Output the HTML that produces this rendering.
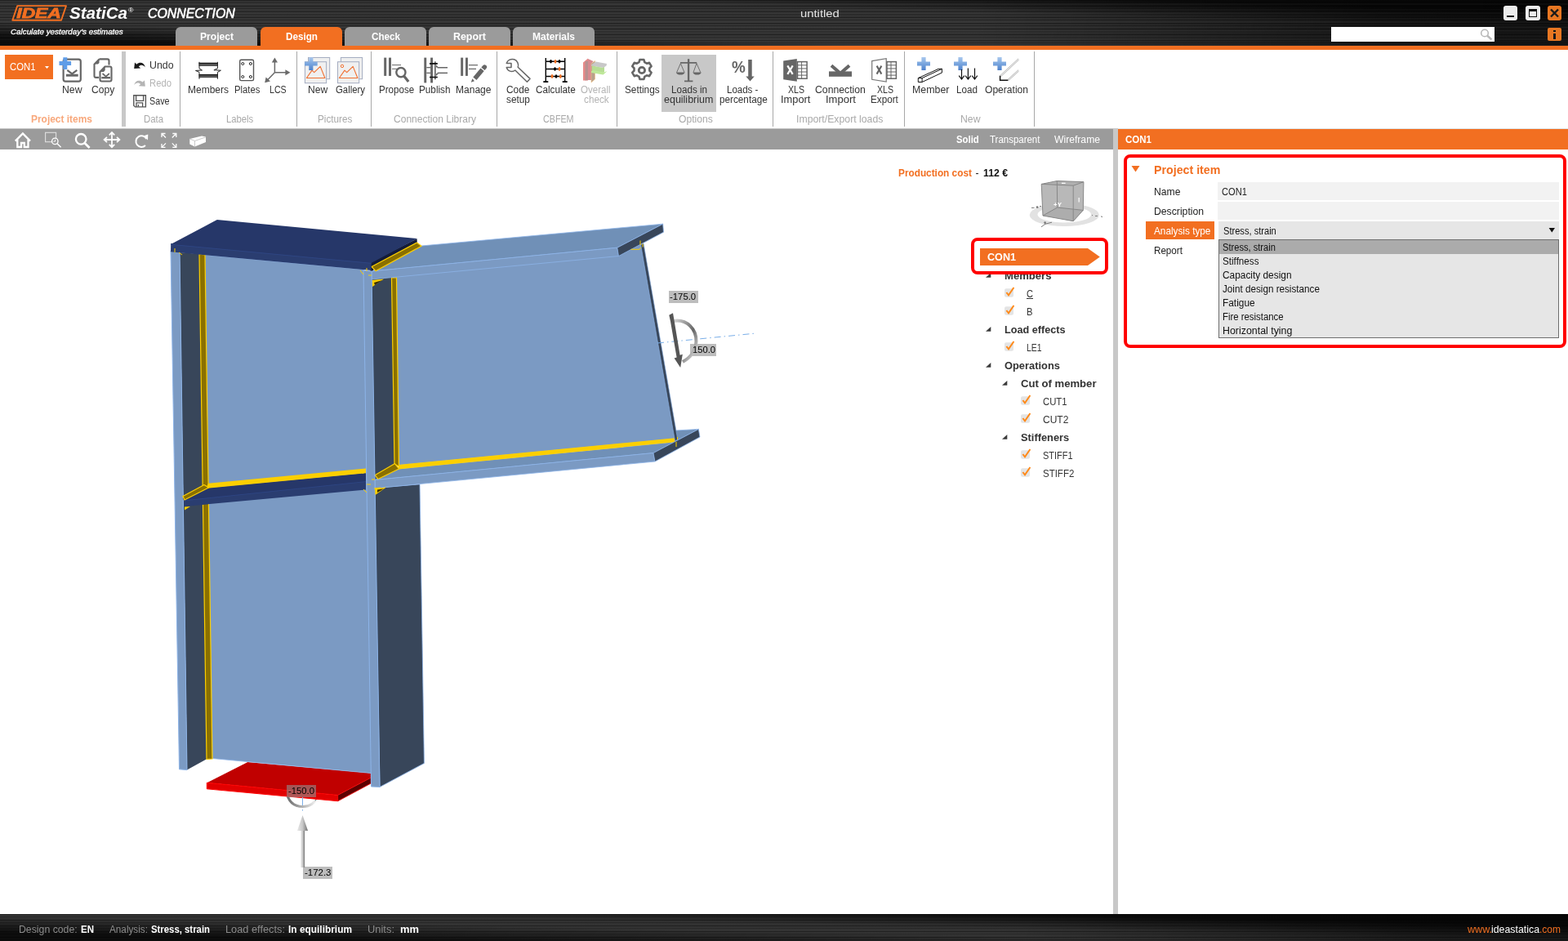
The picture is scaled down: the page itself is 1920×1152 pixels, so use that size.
<!DOCTYPE html>
<html lang="en"><head><meta charset="utf-8"><title>IDEA StatiCa Connection - untitled</title>
<style>
*{margin:0;padding:0;box-sizing:border-box}
html,body{width:1920px;height:1152px;overflow:hidden;background:#fff;font-family:"Liberation Sans",sans-serif;}
#app{position:absolute;left:0;top:0;width:1920px;height:1152px;overflow:hidden;background:#fff}
.abs{position:absolute}
.t{position:absolute;white-space:nowrap;line-height:1;transform-origin:0 0;display:block}
.hdr{left:0;top:0;width:1920px;height:57px;background:#0b0b0b;overflow:hidden}
.brush{position:absolute;left:0;top:0;width:100%;height:100%;
 background:
  repeating-linear-gradient(180deg,rgba(0,0,0,.38) 0px,rgba(0,0,0,.38) 1px,rgba(0,0,0,0) 1.5px,rgba(0,0,0,0) 3px,rgba(0,0,0,.22) 3.5px,rgba(0,0,0,0) 4.5px,rgba(0,0,0,0) 7px),
  repeating-linear-gradient(180deg,rgba(255,255,255,.05) 0px,rgba(255,255,255,0) 1px,rgba(255,255,255,0) 4px,rgba(255,255,255,.06) 5px,rgba(255,255,255,0) 6px,rgba(255,255,255,0) 11px),
  linear-gradient(90deg,rgba(0,0,0,0) 0%,rgba(0,0,0,0) 62%,rgba(0,0,0,.55) 88%,rgba(0,0,0,.6) 100%),
  linear-gradient(181.53deg,rgba(255,255,255,0) 14px,rgba(255,255,255,.15) 34px,rgba(255,255,255,.16) 78px,rgba(255,255,255,0) 97px),
  #0d0d0d}
.brush.sb{background:
  repeating-linear-gradient(180deg,rgba(0,0,0,.38) 0px,rgba(0,0,0,.38) 1px,rgba(0,0,0,0) 1.5px,rgba(0,0,0,0) 3px,rgba(0,0,0,.22) 3.5px,rgba(0,0,0,0) 4.5px,rgba(0,0,0,0) 7px),
  linear-gradient(90deg,rgba(0,0,0,0) 0%,rgba(0,0,0,0) 65%,rgba(0,0,0,.45) 90%,rgba(0,0,0,.5) 100%),
  linear-gradient(181.1deg,rgba(255,255,255,0) 14px,rgba(255,255,255,.15) 30px,rgba(255,255,255,.16) 40px,rgba(255,255,255,0) 60px),
  #0d0d0d}
.oline{left:0;top:56px;width:1920px;height:5px;background:#f26f21}
.tab{position:absolute;top:33px;height:24px;border-radius:6px 6px 0 0;background:#9b9b9b}
.tab.on{background:#f26f21}
.rsep{position:absolute;top:63px;height:92px;width:1px;background:#a8a8a8}
.tbar{left:0;top:157px;width:1363px;height:26px;background:#9b9b9b;border-top:1px solid #c4c4c4}
.split{left:1363px;top:157px;width:6px;height:963px;background:#c8c8c8}
.phead{left:1369px;top:157px;width:551px;height:26px;background:#f26f21;border-top:1px solid #dfe3e6}
.sbar{left:0;top:1119px;width:1920px;height:33px;background:#0b0b0b;overflow:hidden}
.lbl{position:absolute;background:#bdbdbd;height:15px}
.fld{position:absolute;background:#f2f2f2}
.redbox{position:absolute;border:4px solid #ff0000;border-radius:8px}
.cb{position:absolute;width:12px;height:12px;background:#e6e6e6;border-radius:2px}
</style></head><body><div id="app">
<div class="abs hdr"><div class="brush"></div></div>
<div class="tab" style="left:215px;width:100px"></div>
<div class="tab on" style="left:319px;width:100px"></div>
<div class="tab" style="left:422px;width:99.5px"></div>
<div class="tab" style="left:525px;width:100px"></div>
<div class="tab" style="left:628.3px;width:100px"></div>
<div class="abs oline"></div>
<!-- window buttons -->
<div class="abs" style="left:1841px;top:7px;width:17px;height:18px;background:#ececec;border-radius:3px"><div class="abs" style="left:4px;top:11.5px;width:9px;height:2.5px;background:#111"></div></div>
<div class="abs" style="left:1868px;top:7px;width:17.5px;height:18px;background:#ececec;border-radius:3px"><div class="abs" style="left:3.8px;top:4px;width:10px;height:10px;border:1.6px solid #111;border-top-width:3px"></div></div>
<div class="abs" style="left:1895px;top:7px;width:17px;height:18px;background:#e87722;border-radius:3px"><svg class="abs" style="left:0;top:0" width="17" height="18"><path d="M4,4.5l9,9M13,4.5l-9,9" stroke="#1a1a1a" stroke-width="2.4"/></svg></div>
<div class="abs" style="left:1630px;top:33px;width:200px;height:18px;background:#fff"></div>
<svg class="abs" style="left:1810px;top:33px" width="20" height="18"><circle cx="8" cy="7.5" r="4.3" fill="none" stroke="#b9b9b9" stroke-width="1.6"/><path d="M11,10.5l5.5,5" stroke="#b9b9b9" stroke-width="2.4"/></svg>
<div class="abs" style="left:1895px;top:33.5px;width:17px;height:16.5px;background:#e87722;border-radius:2px"><div class="abs" style="left:7.3px;top:3px;width:2.6px;height:2.6px;background:#1a1a1a"></div><div class="abs" style="left:7.3px;top:7px;width:2.6px;height:7px;background:#1a1a1a"></div></div>
<!-- ribbon -->
<div class="abs" style="left:6px;top:67px;width:59px;height:30px;background:#f26f21"></div>
<svg class="abs" style="left:54px;top:80px" width="8" height="5"><polygon points="1,1 6,1 3.5,4" fill="#fff"/></svg>
<div class="abs" style="left:149px;top:63px;width:5px;height:92px;background:#c8c8c8"></div>
<div class="rsep" style="left:220px"></div><div class="rsep" style="left:363px"></div><div class="rsep" style="left:454px"></div><div class="rsep" style="left:608px"></div><div class="rsep" style="left:755px"></div><div class="rsep" style="left:946px"></div><div class="rsep" style="left:1107px"></div><div class="rsep" style="left:1266px"></div>
<div class="abs" style="left:810px;top:67px;width:67px;height:70px;background:#c8c8c8"></div>
<!-- toolbar / splitter / panel -->
<div class="abs tbar"></div>
<div class="abs split"></div>
<div class="abs phead"></div>
<!-- status bar -->
<div class="abs sbar"><div class="brush sb"></div></div>
<!-- property fields -->
<div class="fld" style="left:1491px;top:223px;width:418px;height:22px"></div>
<div class="fld" style="left:1491px;top:247px;width:418px;height:22px"></div>
<div class="abs" style="left:1403px;top:271px;width:84px;height:22px;background:#f26f21"></div>
<div class="abs" style="left:1492px;top:271px;width:417px;height:22px;background:#e6e6e6"></div>
<svg class="abs" style="left:1896px;top:278px" width="10" height="8"><polygon points="0.6,1 8,1 4.3,6.4" fill="#111"/></svg>
<div class="abs" style="left:1492px;top:293px;width:417px;height:121px;background:#e6e6e6;border:1px solid #6e6e6e"><div class="abs" style="left:0;top:0;width:415px;height:17px;background:#ababab"></div></div>
<svg class="abs" style="left:1385px;top:202px" width="12" height="10"><polygon points="0.5,1 10.5,1 5.5,8.5" fill="#f26f21"/></svg>
<!-- load labels -->
<div class="lbl" style="left:819px;top:356px;width:36px"></div>
<div class="lbl" style="left:845px;top:421px;width:32px"></div>
<div class="lbl" style="left:371px;top:1061px;width:36px"></div>

<svg class="abs" style="left:0;top:0" width="1920" height="1152" viewBox="0 0 1920 1152" shape-rendering="geometricPrecision">
<defs>
<linearGradient id="ga" x1="0" y1="0" x2="1" y2="1"><stop offset="0" stop-color="#d8d8d8"/><stop offset=".55" stop-color="#666"/><stop offset="1" stop-color="#f0f0f0"/></linearGradient>
<linearGradient id="gc" x1="0" y1="0" x2="1" y2="0"><stop offset="0" stop-color="#e8e8e8"/><stop offset=".5" stop-color="#c8c8c8"/><stop offset="1" stop-color="#707070"/></linearGradient>
<linearGradient id="gb" x1="0" y1="0" x2="1" y2="0"><stop offset="0" stop-color="#666"/><stop offset=".6" stop-color="#bbb"/><stop offset="1" stop-color="#f4f4f4"/></linearGradient>
</defs>
<g stroke-linejoin="round">
<path d="M350.5,968 C 353,984 363,987.5 371,987.5 C 380,987.5 386,982 387.5,977.5" stroke="url(#gb)" stroke-width="3" fill="none"/>
<path d="M385,976 l3,1.6 l-2,2.8" stroke="#555" stroke-width=".9" fill="none"/>
<!-- red plate -->
<polygon points="253.3,958.3 303.3,933 454.3,946.5 454.3,952 413.6,973.4" fill="#c00000"/>
<polygon points="253.3,958.3 413.6,973.4 413.6,980.7 253.3,965.8" fill="#e20000" stroke="#ff0000" stroke-width="1"/>
<polygon points="413.6,973.4 454.3,952 454.3,959 413.8,980.7" fill="#5e0000" stroke="#ff0000" stroke-width=".8"/>
<!-- column right side dark face -->
<polygon points="458,597.5 514,592.8 519.4,934.4 465,963.5" fill="#38465a" stroke="#8db4e8" stroke-width=".8"/>
<!-- column dark inner left -->
<polygon points="220,309 245,311 253.5,929 229,942.5" fill="#38465a"/>
<!-- column web -->
<polygon points="250,312 446,330 455,946.6 260,928.5" fill="#7b9ac3" stroke="#8db4e8" stroke-width=".8"/>
<!-- left vertical weld -->
<polygon points="244,311 251,312 260,929 253,929.5" fill="#8a7000" stroke="#fccf00" stroke-width="1.2"/>
<!-- column left flange -->
<polygon points="209,307 220,308 229,942.6 219.5,941.8" fill="#7b9ac3" stroke="#8db4e8" stroke-width="1"/>
<!-- dark inner right (between column flange and beam web) -->
<polygon points="454,338 481,336 484,568 465,584 459,590" fill="#38465a"/>
<!-- beam web -->
<polygon points="482,336 757.5,310 785,299 826.5,537 488,569.5" fill="#7b9ac3" stroke="#8db4e8" stroke-width=".8"/>
<!-- beam web end dark line -->
<!-- right vertical weld -->
<polygon points="479.5,340 485.5,340 488.5,571 483,568" fill="#8a7000" stroke="#fccf00" stroke-width="1.2"/>
<!-- small yellow triangle under top flange -->
<polygon points="455,343 470,341.5 456,351" fill="#fccf00"/>
<polygon points="458,346 468,343 459,349" fill="#3a3000"/>
<!-- beam bottom flange -->
<polygon points="459,587.5 488,574 827,541 827.6,527 855.4,525.4 800,554.6" fill="#7090b7" stroke="#8db4e8" stroke-width=".8"/>
<polygon points="488,569 826.3,536.3 827,541.2 488,574.5" fill="#fccf00"/>
<polygon points="459,581.7 483.5,567.6 488.5,574 463,586.5" fill="#8a7000" stroke="#fccf00" stroke-width="1.2"/>
<polygon points="784.6,299.5 788,298 829.8,538 826.5,540" fill="#38465a" stroke="#8db4e8" stroke-width=".6"/>
<polygon points="459,587.5 800,554.6 802,565 459,597.8" fill="#7b9ac3" stroke="#8db4e8" stroke-width=".8"/>
<polygon points="800,554.6 855.4,525.4 857,535 802,565" fill="#38465a" stroke="#8db4e8" stroke-width=".8"/>
<!-- mid stiffener -->
<polygon points="225,611.8 448,588.5 448,599.5 225.5,620" fill="#2a3d70"/>
<polygon points="224,610 252,597.5 448,579 448,589.5 225,612.8" fill="#263769"/>
<path d="M225,612.9 L448,589.6" stroke="#30498a" stroke-width=".7"/>
<polygon points="255,591.8 448,573.6 448,579.2 252,598" fill="#fccf00"/>
<polygon points="224,607.5 250,593.5 255.5,597 226,612" fill="#8a7000" stroke="#fccf00" stroke-width="1.2"/>
<polygon points="226,620.5 233,620 226,624.5" fill="#fccf00"/>
<!-- beam top flange -->
<polygon points="455,332 460,331 516,301 811.7,274.2 755.8,303.2" fill="#7090b7" stroke="#8db4e8" stroke-width=".8"/>
<polygon points="455,332 755.8,303.2 757.5,313.5 455,342" fill="#7b9ac3" stroke="#8db4e8" stroke-width=".8"/>
<polygon points="755.8,303.2 811.7,274.2 812.5,284.2 757.5,313.5" fill="#38465a" stroke="#8db4e8" stroke-width=".8"/>
<!-- top plate -->
<polygon points="453,321.3 510.5,292.2 510.8,297.2 455,332 453,332" fill="#141c38"/>
<polygon points="455,326.5 510.5,297 516,301.3 460,331.7" fill="#8a7000" stroke="#fccf00" stroke-width="1.2"/>
<polygon points="209.2,298 454.6,321 454.6,331 209,308.3" fill="#2a3d70"/>
<polygon points="209.2,299 265.8,269 510.8,292 454.6,322" fill="#263769"/>
<path d="M209.2,299.3 L454.6,322.3" stroke="#30498a" stroke-width=".7"/>
<!-- column right flange front -->
<polygon points="445,331 455,332 465,963.5 454.5,963" fill="#7b9ac3" stroke="#8db4e8" stroke-width="1"/>
<polygon points="459,598 473,596.4 459.5,606" fill="#fccf00"/><polygon points="462,599.6 470,598.2 462,603" fill="#3a3000"/>
<path d="M784,294.5 v5.5 M772.5,305.3 h10.5 l1.5,-2 M787,298.5 v4 M829.5,535 v3 M828,541 v6" stroke="#fccf00" stroke-width="1" fill="none"/>
<!-- tiny weld marks -->
<path d="M214,304v5 M219,309l4,3 M449,328v4 M451,337h4 M441,331l4,5 M447,576l-3,4 M449,593h5 M445,599l4,4 M459,587h-4 M458,598l8,-1" stroke="#fccf00" stroke-width="1" fill="none"/>
</g>
<!-- axis dash-dot -->
<line x1="805" y1="420" x2="926" y2="408" stroke="#79aee8" stroke-width="1" stroke-dasharray="8,4,1.5,4"/>
<!-- load arrow on beam -->
<path d="M824,393 C 842,390 853,404 852.5,418 C 852,430 845,438 836,443" stroke="url(#ga)" stroke-width="4" fill="none"/>
<polygon points="819.3,385.8 824,383.2 825.5,392 832.6,434.8 835.8,433.8 833.2,450 825.6,438.4 828.6,437.4 821,393.4" fill="#555"/>
<!-- bottom arrow -->
<line x1="370.5" y1="976" x2="370.5" y2="996" stroke="#79aee8" stroke-width="1" stroke-dasharray="10,5,1.5,5"/>
<polygon points="370.5,998 377,1017 364,1017" fill="url(#gc)"/>
<rect x="368.3" y="1017" width="4.8" height="45" fill="url(#gc)"/>
<rect x="351" y="961" width="36" height="15" fill="#8f8f8f" fill-opacity=".6"/>
</svg>

<div id="tx" style="position:absolute;left:0;top:0;width:1920px;height:1152px;will-change:transform">
<svg class="abs" style="left:0;top:0" width="1920" height="1152" viewBox="0 0 1920 1152">
<defs>
<linearGradient id="pl" x1="0" y1="0" x2="0" y2="1"><stop offset="0" stop-color="#a9c8ee"/><stop offset=".5" stop-color="#7aa6de"/><stop offset="1" stop-color="#4f82cc"/></linearGradient>
<g id="plus"><path d="M5.4,0h5.2v5.4h5.4v5.2h-5.4v5.4h-5.2v-5.4h-5.4v-5.2h5.4z" fill="url(#pl)"/></g>
<g id="mount"><path d="M2.2,20 l6.6,-9.4 l2.7,2.6 l7.5,-7.3 l5.7,14.1z" fill="none" stroke="#f07030" stroke-width="1.1" stroke-linejoin="round"/></g>
<g id="chk"><rect x="0" y="1.7" width="11" height="10.4" rx="2" fill="#e4e4e4"/><path d="M2.4,6.4 l2.6,3.4 l6.4,-9.4" fill="none" stroke="#ff8a1a" stroke-width="2"/></g>
<g id="tri"><polygon points="6.3,0 6.3,5.8 0,5.8" fill="#3a3a3a"/></g>
</defs>
<!-- IDEA logo -->
<g>
<polygon points="21.3,7.1 81,7.1 75,24.8 15.3,24.8" fill="none" stroke="#f26f21" stroke-width="1.9" stroke-linejoin="round"/>
<text x="20.3" y="22.4" font-family="Liberation Sans, sans-serif" font-size="16.8" font-weight="bold" font-style="italic" fill="#f26f21" textLength="54.5" lengthAdjust="spacingAndGlyphs" stroke="#f26f21" stroke-width=".8">IDEA</text>
</g>
<!-- Project items: New -->
<rect x="77.6" y="72.7" width="21.2" height="27" rx="2.6" fill="none" stroke="#666" stroke-width="2.2"/>
<rect x="81" y="90.7" width="14.7" height="3" fill="#666"/>
<path d="M82.3,85.8 l6,4.6 l6,-4.6" fill="none" stroke="#666" stroke-width="2.2"/>
<path d="M77.3,70.3h5v4.8h4.8v5h-4.8v4.8h-5v-4.8h-4.8v-5h4.8z" fill="#5f9de8"/>
<!-- Copy -->
<path d="M121.5,72.4 h10 a2,2 0 0 1 2,2 v5 M121.5,72.4 l-6,6.2 v14.3 a2,2 0 0 0 2,2 h3.5" fill="none" stroke="#666" stroke-width="2.1"/>
<polygon points="121.5,72.4 121.5,77 120,78.6 115.5,78.6" fill="#666"/>
<path d="M128.5,81.5 h6 a2,2 0 0 1 2,2 v14 a2,2 0 0 1 -2,2 h-10 a2,2 0 0 1 -2,-2 v-9.5 z" fill="#fff" stroke="#666" stroke-width="2.1"/>
<polygon points="128.7,81.5 128.7,86 127,88 122.3,88" fill="#666"/>
<rect x="124.3" y="94" width="10.7" height="2.4" fill="#666"/>
<path d="M125.5,90 l4.2,3.6 l4.2,-3.6" fill="none" stroke="#666" stroke-width="1.8"/>
<!-- undo / redo / save -->
<path d="M164.2,84 l0.8,-7.5 l2.3,2.2 c4,-3.4 9.5,-2.2 10.5,3.8 c-2,-3.4 -5.8,-3.6 -8,-1.2 l2.4,2.2 z" fill="#1a1a1a"/>
<path d="M177.8,105.8 l-0.8,-7.5 l-2.3,2.2 c-4,-3.4 -9.5,-2.2 -10.5,3.8 c2,-3.4 5.8,-3.6 8,-1.2 l-2.4,2.2 z" fill="#b4b4b4"/>
<path d="M163.8,116.7 h14.6 v14.2 h-12.8 l-1.8,-1.6 z" fill="none" stroke="#555" stroke-width="1.4"/>
<path d="M166.6,116.7 v6.6 h9 v-6.6 M167,130.9 v-5 h7.6 v5 M169.4,128 v2.6" fill="none" stroke="#555" stroke-width="1.3"/>
<!-- Members -->
<rect x="243.6" y="77" width="23.2" height="4" fill="#555"/><rect x="243.6" y="76.7" width="23.2" height="1.2" fill="#111"/>
<rect x="243.6" y="91.2" width="23.2" height="4" fill="#555"/><rect x="243.6" y="90.9" width="23.2" height="1.2" fill="#111"/>
<path d="M244,75.8 v8 l3.5,2.2 l-8,0.4 l4.5,2 v8.3 M266.4,75.8 v8 l-4.5,2 l8.5,0.4 l-4,2.2 v8.3" fill="none" stroke="#222" stroke-width="1"/>
<!-- Plates -->
<rect x="293.7" y="73.3" width="16.8" height="25.3" rx="1.6" fill="none" stroke="#555" stroke-width="1.4"/>
<g fill="none" stroke="#222" stroke-width="1"><circle cx="297.3" cy="78" r="1.5"/><circle cx="306.8" cy="78" r="1.5"/><circle cx="297.3" cy="94" r="1.5"/><circle cx="306.8" cy="94" r="1.5"/></g>
<!-- LCS -->
<path d="M336.4,88.7 V74 M336.4,88.7 H351 M336.4,88.7 L327,98.5" fill="none" stroke="#6a6a6a" stroke-width="1.5"/>
<polygon points="336.4,70.6 340,76.4 332.8,76.4" fill="#6a6a6a"/><polygon points="355.4,88.7 349.4,92.2 349.4,85.2" fill="#6a6a6a"/><polygon points="324.2,101.3 325.6,94.6 331,99.6" fill="#6a6a6a"/>
<!-- Pictures New -->
<g fill="#f0f0f0" stroke="#a4acc0" stroke-width="1"><rect x="377.5" y="70.5" width="26.2" height="26.2"/><rect x="373.4" y="75.7" width="26.2" height="26"/><rect x="417.4" y="70.5" width="26.2" height="26.2"/><rect x="413.5" y="75.7" width="26.2" height="26"/></g>
<use href="#mount" x="373.2" y="75.5"/><use href="#mount" x="413.2" y="75.5"/>
<circle cx="419" cy="80.9" r="1.7" fill="none" stroke="#f07030" stroke-width="1"/>
<use href="#plus" x="373" y="70.2" transform="translate(373 70.2) scale(.98) translate(-373 -70.2)"/>
<!-- Propose -->
<g fill="#666"><rect x="470.2" y="70.6" width="3" height="22.3"/><rect x="476" y="70.6" width="3" height="22.3"/><rect x="480" y="79.1" width="11" height="1"/><rect x="480" y="83.8" width="6" height="1"/></g>
<circle cx="490.9" cy="88.6" r="5.6" fill="#fff" stroke="#666" stroke-width="2.4"/><path d="M494.6,93 l5.6,7" stroke="#666" stroke-width="3.2"/>
<!-- Publish -->
<g fill="#666"><rect x="519.3" y="70.6" width="2.9" height="30.8"/><rect x="527.1" y="70.6" width="2.9" height="30.8"/><rect x="532" y="75.3" width="1.7" height="22"/><rect x="522.3" y="82" width="5" height="1.3"/><rect x="522.3" y="88.7" width="5" height="1.3"/><rect x="535.5" y="82" width="12.5" height="1.5"/><rect x="535.5" y="88.6" width="12.5" height="1.5"/><polygon points="534,79.5 537,82.5 534,82.5"/><polygon points="534,93 537,90 534,90"/></g>
<rect x="526" y="77" width="9.8" height="1.8" fill="#111"/><rect x="526" y="93.7" width="9.8" height="1.6" fill="#111"/>
<!-- Manage -->
<g fill="#666"><rect x="564.2" y="70.6" width="2.9" height="22.3"/><rect x="570" y="70.6" width="2.9" height="22.3"/><rect x="574" y="79.1" width="11" height="1.2"/><rect x="574" y="83.8" width="9" height="1.2"/>
<polygon points="576.8,100.8 578.4,96.3 581,99.3"/><polygon points="579.3,94.6 588.5,83.6 592.7,87 583.5,98"/><path d="M589.3,82.6 l2,-2.3 a2.7,2.7 0 0 1 4.2,3.4 l-2,2.3z"/></g>
<!-- Code setup wrench -->
<path transform="translate(0,1.2)" d="M620.2,76.2 h5.8 v5 h-5.8 a6.6,6.6 0 0 0 10.6,3.6 l14.6,14.2 l3.6,-3.8 l-14.8,-14.2 a6.6,6.6 0 0 0 -14,-4.8z" fill="#fff" stroke="#666" stroke-width="1.5" stroke-linejoin="round"/>
<!-- Calculate abacus -->
<path d="M668.3,71 V100 M691.7,71 V100 M668.3,75.3 H691.7 M668.3,84.5 H691.7 M668.3,93.5 H691.7" stroke="#000" stroke-width="1.4" fill="none"/>
<path d="M665.3,100.2 h6 M688.7,100.2 h6" stroke="#000" stroke-width="1.8"/>
<g fill="#000"><ellipse cx="674.5" cy="75.3" rx="1.4" ry="2.2"/><ellipse cx="685" cy="75.3" rx="1.4" ry="2.2"/><ellipse cx="679.5" cy="84.5" rx="1.4" ry="2.2"/><ellipse cx="681" cy="93.5" rx="1.4" ry="2.2"/></g>
<g fill="#f26f21"><ellipse cx="680" cy="75.3" rx="1.4" ry="2.4"/><ellipse cx="685" cy="84.5" rx="1.4" ry="2.4"/><ellipse cx="676" cy="93.5" rx="1.4" ry="2.4"/><ellipse cx="686.3" cy="93.5" rx="1.4" ry="2.4"/></g>
<!-- Overall check (faded) -->
<g>
<polygon points="714,76.5 720,71.5 720,98.5 714,98.5" fill="#e98a8a"/><polygon points="716.5,75 723.5,74 723.5,97.5 716.5,98.5" fill="#b89090"/><polygon points="720,72 726.5,75 724,78.5 724,98 720,98" fill="#d88a90"/>
<polygon points="724,78 728.5,74.5 728.5,97 724,101" fill="#b8a08c" stroke="#f0c080" stroke-width=".6"/>
<polygon points="724,79.5 729.5,75.5 743,78 742.5,80.5 738.5,83 724,80.5" fill="#c8c8c8"/><polygon points="725,80.6 738.5,83 740,81.5 740,88 738,90 725,87.5" fill="#b6dc94"/><polygon points="724,87.3 726,86 740,88.5 743,87 742,88.6 738.5,91.5 724,89" fill="#bfe89a"/>
</g>
<!-- Settings gear -->
<path d="M783.4,73 h5 l0.9,3.2 l2.6,1.5 l3.2,-0.9 l2.5,4.3 l-2.3,2.4 v3 l2.3,2.4 l-2.5,4.3 l-3.2,-0.9 l-2.6,1.5 l-0.9,3.2 h-5 l-0.9,-3.2 l-2.6,-1.5 l-3.2,0.9 l-2.5,-4.3 l2.3,-2.4 v-3 l-2.3,-2.4 l2.5,-4.3 l3.2,0.9 l2.6,-1.5z" fill="none" stroke="#666" stroke-width="2.6" stroke-linejoin="round"/>
<circle cx="785.9" cy="86" r="3.7" fill="none" stroke="#666" stroke-width="2.8"/>
<!-- Scales -->
<g stroke="#666" fill="none"><path d="M843.1,72.2 V99.4" stroke-width="2.3"/><path d="M833,76.8 H853.2 M838,99.4 H848.4" stroke-width="1.7"/><path d="M828.6,88.6 L833.4,77.6 L838,88.6 M849,88.6 L853,77.6 L857.8,88.6" stroke-width=".9"/></g>
<path d="M828,88.6 h10.4 a5.2,3 0 0 1 -10.4,0z M848.6,88.6 h10 a5,3 0 0 1 -10,0z" fill="#666"/>
<!-- Loads percentage -->
<path d="M916.2,73 h4.5 v20.5 h3 l-5.2,5.9 l-5.2,-5.9 h2.9z" fill="#666"/>
<!-- XLS import -->
<polygon points="959.2,74.4 975.8,71.9 975.8,99.8 959.2,97.3" fill="#666"/>
<path d="M964.3,80.4 l6.4,10.4 M970.7,80.4 l-6.4,10.4" stroke="#fff" stroke-width="2.2"/>
<g fill="none" stroke="#666"><rect x="976.5" y="75.6" width="11.6" height="20.6" stroke-width="1.5"/><path d="M976.5,79.8h11.6M976.5,83.9h11.6M976.5,88h11.6M976.5,92.1h11.6M981.6,75.6v20.6" stroke-width="1"/></g>
<!-- Connection import -->
<rect x="1015" y="87.4" width="28" height="6.4" fill="#666"/><path d="M1018,80.2 l11,9.6 l11,-9.6" fill="none" stroke="#666" stroke-width="4"/>
<!-- XLS export -->
<polygon points="1067.7,74.6 1085.2,71.7 1085.2,100.1 1067.7,97.3" fill="#fff" stroke="#777" stroke-width="1.2"/>
<path d="M1073.6,80.6 l5.8,10 M1079.4,80.6 l-5.8,10" stroke="#666" stroke-width="2.1"/>
<g fill="none" stroke="#666"><rect x="1086" y="75.6" width="11.4" height="20.6" stroke-width="1.5"/><path d="M1086,79.8h11.4M1086,83.9h11.4M1086,88h11.4M1086,92.1h11.4M1091,75.6v20.6" stroke-width="1"/></g>
<!-- New member/load/operation -->
<use href="#plus" x="1123" y="70"/><use href="#plus" x="1168" y="70"/><use href="#plus" x="1216" y="70"/>
<path d="M1124.3,95.6 h4.8 v4.9 h-4.8z M1124.3,95.6 L1149.2,84.3 H1153.4 L1129.1,95.6 M1153.4,84.3 V89 L1129.1,100.5" fill="#fff" stroke="#111" stroke-width="1" stroke-linejoin="round"/>
<path d="M1177.5,85 V97 M1185.4,83.6 V97 M1193.5,83.6 V97 M1174.2,92.6 l3.3,4.4 l3.3,-4.4 M1182.1,92.6 l3.3,4.4 l3.3,-4.4 M1190.2,92.6 l3.3,4.4 l3.3,-4.4" fill="none" stroke="#111" stroke-width="1.2"/>
<path d="M1224.3,92.9 L1247,71.8 M1225.5,93.8 L1247.6,73.2 M1233.8,97.6 L1247,85.6 M1234.8,98.6 L1247.6,87" stroke="#aaa" stroke-width=".9" fill="none"/>
<path d="M1224.6,92.7 V98.3 H1234.4" fill="none" stroke="#111" stroke-width="1.5"/>
<!-- toolbar icons -->
<g fill="none" stroke="#fff" stroke-width="2.3">
<path d="M18.8,172.6 L27.9,163.4 L37,172.6 M21.3,171 V180 H26 V175 H29.8 V180 H34.5 V171"/>
<circle cx="99.2" cy="170.3" r="6.3"/><path d="M103.6,175 l6,6" stroke-width="2.8"/>
<path d="M137,162.5 V180 M128,171 H146 M133.8,165.4 L137,162 L140.2,165.4 M133.8,176.8 L137,180.2 L140.2,176.8 M131,167.8 L127.6,171 L131,174.2 M143,167.8 L146.4,171 L143,174.2" stroke-width="1.8"/>
<path d="M179.3,170 A6.8,6.8 0 1 0 178,178" stroke-width="2"/>
<path d="M198,168 V163.5 H202.5 M198.3,163.8 L203,168.5 M215.8,168 V163.5 H211.3 M215.5,163.8 L210.8,168.5 M198,176 V180.4 H202.5 M198.3,180.1 L203,175.4 M215.8,176 V180.4 H211.3 M215.5,180.1 L210.8,175.4" stroke-width="1.3"/>
</g>
<polygon points="175.6,166.4 181.3,164.4 181,171.6" fill="#fff"/>
<rect x="55.6" y="162.3" width="13" height="11.4" fill="none" stroke="#e0e0e0" stroke-width="1.1"/>
<circle cx="67.3" cy="172.9" r="3.7" fill="#9b9b9b" stroke="#fff" stroke-width="1.3"/><path d="M70,175.8 l4.6,4.4" stroke="#fff" stroke-width="1.5"/><path d="M67.6,170.8 v2.4 h-2.2" stroke="#fff" stroke-width=".9" fill="none"/>
<polygon points="232.3,170 247,166.4 252,167.6 252,174 238.5,179.6 232.3,176.5" fill="#fff"/><path d="M232.3,170 L238.5,172.5 L252,167.8 M238.5,172.5 V179.4" stroke="#bbb" stroke-width=".8" fill="none"/>
<!-- nav cube -->
<path d="M1260.7,263.2 a42.6,13.9 0 1 0 85.2,0 a42.6,13.9 0 1 0 -85.2,0z M1270.5,262.6 a32.8,9.9 0 1 0 65.6,0 a32.8,9.9 0 1 0 -65.6,0z" fill="#e2e2e2" fill-rule="evenodd"/>
<polygon points="1275.2,225.4 1294.3,221.5 1326.9,222.7 1326.3,257.4 1314.2,270.7 1277,264" fill="#b8b8b8"/>
<polygon points="1277,264 1294.7,254 1326.3,257.4 1314.2,270.7" fill="#adadad"/>
<polygon points="1275.2,225.4 1294.3,221.5 1326.9,222.7 1314.2,227.2" fill="#b0b0b0"/>
<path d="M1275.2,225.4 L1294.3,221.5 L1326.9,222.7 L1326.3,257.4 L1314.2,270.7 L1277,264z M1275.2,225.4 L1314.2,227.2 L1326.9,222.7 M1314.2,227.2 V270.7 M1294.3,221.5 L1294.7,254 L1277,264 M1294.7,254 L1326.3,257.4" fill="none" stroke="#878787" stroke-width="1" stroke-linejoin="round"/>
<text x="1290" y="253" font-family="Liberation Sans, sans-serif" font-size="8" font-weight="bold" fill="#fff">+Y</text>
<rect x="1320.5" y="242" width="1.4" height="5.5" fill="#f4f4f4"/><rect x="1300" y="223.7" width="4.6" height="1.2" fill="#fff"/>
<path d="M1263,254.4 h3.5 M1269,254 h2.5 M1273,252.6 h2 M1337,263.6 h1 M1341,264.4 h3 M1348,264.8 l2,0.8 M1275,277.8 l5,-3.6 l8,-2" stroke="#7a7a7a" stroke-width="1" fill="none"/>
<circle cx="1270" cy="253.5" r="1.2" fill="#777"/><circle cx="1279.6" cy="272.6" r="1.3" fill="#777"/>
<!-- tree arrow -->
<polygon points="1200,304 1332,304 1346.8,314.4 1332,325 1200,325" fill="#f26f21"/>
<!-- tree glyphs -->
<use href="#tri" x="1207" y="334"/><use href="#tri" x="1207" y="400"/><use href="#tri" x="1207" y="444"/><use href="#tri" x="1227" y="466"/><use href="#tri" x="1227" y="532"/>
<use href="#chk" x="1230" y="351.6"/><use href="#chk" x="1230" y="373.6"/><use href="#chk" x="1230" y="417.6"/>
<use href="#chk" x="1250" y="483.6"/><use href="#chk" x="1250" y="505.6"/><use href="#chk" x="1250" y="549.6"/><use href="#chk" x="1250" y="571.6"/>
</svg>

<span class="t" style="left:84.5px;top:5.9px;font-size:20px;color:#fff;font-weight:bold;font-style:italic;transform:scaleX(1.0304);">StatiCa</span>
<span class="t" style="left:157.0px;top:8.6px;font-size:7px;color:#fff;transform:scaleX(1.2568);">®</span>
<span class="t" style="left:181.2px;top:8.2px;font-size:16.3px;color:#fff;font-style:italic;transform:scaleX(0.9758);-webkit-text-stroke:.55px #fff;">CONNECTION</span>
<span class="t" style="left:12.8px;top:33.7px;font-size:9.5px;color:#fff;font-style:italic;transform:scaleX(1.0330);-webkit-text-stroke:.3px #fff;">Calculate yesterday's estimates</span>
<span class="t" style="left:244.5px;top:38.0px;font-size:13px;color:#fff;font-weight:bold;transform:scaleX(0.9302);">Project</span>
<span class="t" style="left:349.5px;top:38.0px;font-size:13px;color:#fff;font-weight:bold;transform:scaleX(0.8998);">Design</span>
<span class="t" style="left:454.5px;top:38.0px;font-size:13px;color:#fff;font-weight:bold;transform:scaleX(0.8967);">Check</span>
<span class="t" style="left:554.5px;top:38.0px;font-size:13px;color:#fff;font-weight:bold;transform:scaleX(0.9549);">Report</span>
<span class="t" style="left:651.9px;top:38.0px;font-size:13px;color:#fff;font-weight:bold;transform:scaleX(0.9224);">Materials</span>
<span class="t" style="left:979.5px;top:10.0px;font-size:13px;color:#e4e4e4;transform:scaleX(1.1402);">untitled</span>
<span class="t" style="left:12.0px;top:76.4px;font-size:12px;color:#fff;transform:scaleX(0.9447);">CON1</span>
<span class="t" style="left:76.0px;top:103.6px;font-size:12px;color:#333;transform:scaleX(1.0202);">New</span>
<span class="t" style="left:112.0px;top:103.6px;font-size:12px;color:#333;transform:scaleX(1.0084);">Copy</span>
<span class="t" style="left:230.2px;top:103.6px;font-size:12px;color:#333;transform:scaleX(0.9997);">Members</span>
<span class="t" style="left:287.0px;top:103.6px;font-size:12px;color:#333;transform:scaleX(0.9413);">Plates</span>
<span class="t" style="left:329.9px;top:103.6px;font-size:12px;color:#333;transform:scaleX(0.8825);">LCS</span>
<span class="t" style="left:377.0px;top:103.6px;font-size:12px;color:#333;transform:scaleX(1.0098);">New</span>
<span class="t" style="left:411.1px;top:103.6px;font-size:12px;color:#333;transform:scaleX(0.9470);">Gallery</span>
<span class="t" style="left:464.2px;top:103.6px;font-size:12px;color:#333;transform:scaleX(0.9653);">Propose</span>
<span class="t" style="left:513.2px;top:103.6px;font-size:12px;color:#333;transform:scaleX(0.9782);">Publish</span>
<span class="t" style="left:558.0px;top:103.6px;font-size:12px;color:#333;transform:scaleX(1.0029);">Manage</span>
<span class="t" style="left:620.1px;top:103.6px;font-size:12px;color:#333;transform:scaleX(0.9865);">Code</span>
<span class="t" style="left:656.4px;top:103.6px;font-size:12px;color:#333;transform:scaleX(0.9764);">Calculate</span>
<span class="t" style="left:764.8px;top:103.6px;font-size:12px;color:#333;transform:scaleX(0.9836);">Settings</span>
<span class="t" style="left:822.0px;top:103.6px;font-size:12px;color:#333;transform:scaleX(0.9719);">Loads in</span>
<span class="t" style="left:890.1px;top:103.6px;font-size:12px;color:#333;transform:scaleX(0.9593);">Loads -</span>
<span class="t" style="left:964.5px;top:103.6px;font-size:12px;color:#333;transform:scaleX(0.8815);">XLS</span>
<span class="t" style="left:998.0px;top:103.6px;font-size:12px;color:#333;transform:scaleX(1.0195);">Connection</span>
<span class="t" style="left:1073.5px;top:103.6px;font-size:12px;color:#333;transform:scaleX(0.8815);">XLS</span>
<span class="t" style="left:1117.0px;top:103.6px;font-size:12px;color:#333;transform:scaleX(1.0315);">Member</span>
<span class="t" style="left:1171.0px;top:103.6px;font-size:12px;color:#333;transform:scaleX(0.9737);">Load</span>
<span class="t" style="left:1206.0px;top:103.6px;font-size:12px;color:#333;transform:scaleX(1.0056);">Operation</span>
<span class="t" style="left:620.1px;top:116.4px;font-size:12px;color:#333;transform:scaleX(0.9844);">setup</span>
<span class="t" style="left:813.2px;top:116.4px;font-size:12px;color:#333;transform:scaleX(1.0400);">equilibrium</span>
<span class="t" style="left:880.5px;top:116.4px;font-size:12px;color:#333;transform:scaleX(0.9784);">percentage</span>
<span class="t" style="left:956.0px;top:116.4px;font-size:12px;color:#333;transform:scaleX(1.0701);">Import</span>
<span class="t" style="left:1010.5px;top:116.4px;font-size:12px;color:#333;transform:scaleX(1.0848);">Import</span>
<span class="t" style="left:1066.4px;top:116.4px;font-size:12px;color:#333;transform:scaleX(0.9759);">Export</span>
<span class="t" style="left:711.4px;top:103.6px;font-size:12px;color:#b4b4b4;transform:scaleX(0.9628);">Overall</span>
<span class="t" style="left:714.5px;top:116.4px;font-size:12px;color:#b4b4b4;transform:scaleX(0.9806);">check</span>
<span class="t" style="left:183.0px;top:73.6px;font-size:12px;color:#333;transform:scaleX(1.0283);">Undo</span>
<span class="t" style="left:183.0px;top:95.6px;font-size:12px;color:#b4b4b4;transform:scaleX(0.9377);">Redo</span>
<span class="t" style="left:183.0px;top:117.8px;font-size:12px;color:#333;transform:scaleX(0.8955);">Save</span>
<span class="t" style="left:37.5px;top:140.1px;font-size:12px;color:#f8a87c;font-weight:bold;transform:scaleX(0.9950);">Project items</span>
<span class="t" style="left:175.8px;top:140.1px;font-size:12px;color:#a9a9a9;transform:scaleX(0.9523);">Data</span>
<span class="t" style="left:277.0px;top:140.1px;font-size:12px;color:#a9a9a9;transform:scaleX(0.9399);">Labels</span>
<span class="t" style="left:389.0px;top:140.1px;font-size:12px;color:#a9a9a9;transform:scaleX(0.9744);">Pictures</span>
<span class="t" style="left:482.2px;top:140.1px;font-size:12px;color:#a9a9a9;transform:scaleX(1.0026);">Connection Library</span>
<span class="t" style="left:664.5px;top:140.1px;font-size:12px;color:#a9a9a9;transform:scaleX(0.8929);">CBFEM</span>
<span class="t" style="left:831.4px;top:140.1px;font-size:12px;color:#a9a9a9;transform:scaleX(1.0119);">Options</span>
<span class="t" style="left:975.1px;top:140.1px;font-size:12px;color:#a9a9a9;transform:scaleX(1.0226);">Import/Export loads</span>
<span class="t" style="left:1176.0px;top:140.1px;font-size:12px;color:#a9a9a9;transform:scaleX(1.0202);">New</span>
<span class="t" style="left:1171.3px;top:164.6px;font-size:12px;color:#fff;font-weight:bold;transform:scaleX(0.9474);">Solid</span>
<span class="t" style="left:1212.1px;top:164.6px;font-size:12px;color:#fff;transform:scaleX(0.9554);">Transparent</span>
<span class="t" style="left:1290.5px;top:164.6px;font-size:12px;color:#fff;transform:scaleX(1.0119);">Wireframe</span>
<span class="t" style="left:1378.4px;top:165.4px;font-size:12.5px;color:#fff;font-weight:bold;transform:scaleX(0.9184);">CON1</span>
<span class="t" style="left:1099.5px;top:206.2px;font-size:12px;color:#f26f21;font-weight:bold;transform:scaleX(0.9842);">Production cost</span>
<span class="t" style="left:1194.5px;top:206.2px;font-size:12px;color:#111;transform:scaleX(1.0000);">-</span>
<span class="t" style="left:1203.5px;top:206.2px;font-size:12px;color:#111;font-weight:bold;transform:scaleX(1.0213);">112 €</span>
<span class="t" style="left:820.3px;top:357.9px;font-size:11px;color:#000;transform:scaleX(1.0319);">-175.0</span>
<span class="t" style="left:847.5px;top:422.9px;font-size:11px;color:#000;transform:scaleX(1.0170);">150.0</span>
<span class="t" style="left:352.5px;top:962.9px;font-size:11px;color:#000;transform:scaleX(1.0255);">-150.0</span>
<span class="t" style="left:372.5px;top:1062.9px;font-size:11px;color:#000;transform:scaleX(1.0416);">-172.3</span>
<span class="t" style="left:1208.5px;top:308.3px;font-size:13.5px;color:#fff;font-weight:bold;transform:scaleX(0.9329);">CON1</span>
<span class="t" style="left:1230.0px;top:331.7px;font-size:12.5px;color:#333;font-weight:bold;transform:scaleX(1.0475);">Members</span>
<span class="t" style="left:1257.0px;top:353.7px;font-size:12.5px;color:#333;transform:scaleX(0.8858);text-decoration:underline;">C</span>
<span class="t" style="left:1257.0px;top:375.7px;font-size:12.5px;color:#333;transform:scaleX(0.8989);">B</span>
<span class="t" style="left:1230.0px;top:397.7px;font-size:12.5px;color:#333;font-weight:bold;transform:scaleX(1.0117);">Load effects</span>
<span class="t" style="left:1257.0px;top:419.7px;font-size:12.5px;color:#333;transform:scaleX(0.8315);">LE1</span>
<span class="t" style="left:1230.0px;top:441.7px;font-size:12.5px;color:#333;font-weight:bold;transform:scaleX(1.0288);">Operations</span>
<span class="t" style="left:1249.8px;top:463.7px;font-size:12.5px;color:#333;font-weight:bold;transform:scaleX(1.0487);">Cut of member</span>
<span class="t" style="left:1276.9px;top:485.7px;font-size:12.5px;color:#333;transform:scaleX(0.9064);">CUT1</span>
<span class="t" style="left:1276.9px;top:507.7px;font-size:12.5px;color:#333;transform:scaleX(0.9615);">CUT2</span>
<span class="t" style="left:1249.8px;top:529.7px;font-size:12.5px;color:#333;font-weight:bold;transform:scaleX(1.0268);">Stiffeners</span>
<span class="t" style="left:1276.9px;top:551.7px;font-size:12.5px;color:#333;transform:scaleX(0.8783);">STIFF1</span>
<span class="t" style="left:1276.9px;top:573.7px;font-size:12.5px;color:#333;transform:scaleX(0.9191);">STIFF2</span>
<span class="t" style="left:1413.1px;top:201.3px;font-size:14.3px;color:#f26f21;font-weight:bold;transform:scaleX(0.9946);">Project item</span>
<span class="t" style="left:1413.1px;top:228.5px;font-size:12.7px;color:#222;transform:scaleX(0.9573);">Name</span>
<span class="t" style="left:1413.1px;top:252.7px;font-size:12.7px;color:#222;transform:scaleX(0.9627);">Description</span>
<span class="t" style="left:1413.1px;top:276.6px;font-size:12.7px;color:#fff;transform:scaleX(0.9284);">Analysis type</span>
<span class="t" style="left:1413.1px;top:300.8px;font-size:12.7px;color:#222;transform:scaleX(0.9162);">Report</span>
<span class="t" style="left:1495.9px;top:228.5px;font-size:12.7px;color:#222;transform:scaleX(0.8738);">CON1</span>
<span class="t" style="left:1497.7px;top:276.8px;font-size:12px;color:#111;transform:scaleX(0.9253);">Stress, strain</span>
<span class="t" style="left:1496.8px;top:297.1px;font-size:12px;color:#111;transform:scaleX(0.9267);">Stress, strain</span>
<span class="t" style="left:1496.8px;top:314.1px;font-size:12px;color:#111;transform:scaleX(0.9714);">Stiffness</span>
<span class="t" style="left:1496.8px;top:331.1px;font-size:12px;color:#111;transform:scaleX(0.9896);">Capacity design</span>
<span class="t" style="left:1496.8px;top:348.1px;font-size:12px;color:#111;transform:scaleX(0.9740);">Joint design resistance</span>
<span class="t" style="left:1496.8px;top:365.1px;font-size:12px;color:#111;transform:scaleX(0.9892);">Fatigue</span>
<span class="t" style="left:1496.8px;top:382.1px;font-size:12px;color:#111;transform:scaleX(0.9479);">Fire resistance</span>
<span class="t" style="left:1496.8px;top:399.1px;font-size:12px;color:#111;transform:scaleX(1.0324);">Horizontal tying</span>
<span class="t" style="left:22.8px;top:1131.8px;font-size:12px;color:#8c8c8c;transform:scaleX(1.0236);">Design code:</span>
<span class="t" style="left:98.5px;top:1131.8px;font-size:12px;color:#fff;font-weight:bold;transform:scaleX(0.9597);">EN</span>
<span class="t" style="left:133.5px;top:1131.8px;font-size:12px;color:#8c8c8c;transform:scaleX(0.9785);">Analysis:</span>
<span class="t" style="left:184.5px;top:1131.8px;font-size:12px;color:#fff;font-weight:bold;transform:scaleX(0.9468);">Stress, strain</span>
<span class="t" style="left:275.5px;top:1131.8px;font-size:12px;color:#8c8c8c;transform:scaleX(1.0657);">Load effects:</span>
<span class="t" style="left:352.5px;top:1131.8px;font-size:12px;color:#fff;font-weight:bold;transform:scaleX(0.9915);">In equilibrium</span>
<span class="t" style="left:449.5px;top:1131.8px;font-size:12px;color:#8c8c8c;transform:scaleX(1.0754);">Units:</span>
<span class="t" style="left:489.5px;top:1131.8px;font-size:12px;color:#fff;font-weight:bold;transform:scaleX(1.0776);">mm</span>
<span class="t" style="left:1796.5px;top:1131.8px;font-size:12px;color:#f26f21;transform:scaleX(1.0463);">www.</span>
<span class="t" style="left:1826.0px;top:1131.8px;font-size:12px;color:#fff;transform:scaleX(1.0283);">ideastatica</span>
<span class="t" style="left:1884.5px;top:1131.8px;font-size:12px;color:#f26f21;transform:scaleX(0.9994);">.com</span>
<span class="t" style="left:896.3px;top:70.7px;font-size:21px;color:#666;font-weight:bold;transform:scaleX(0.8990);">%</span>
</div>
<div class="redbox" style="left:1189px;top:291px;width:168px;height:45px"></div>
<div class="redbox" style="left:1376px;top:188.5px;width:542px;height:237.5px"></div>

</div></body></html>
